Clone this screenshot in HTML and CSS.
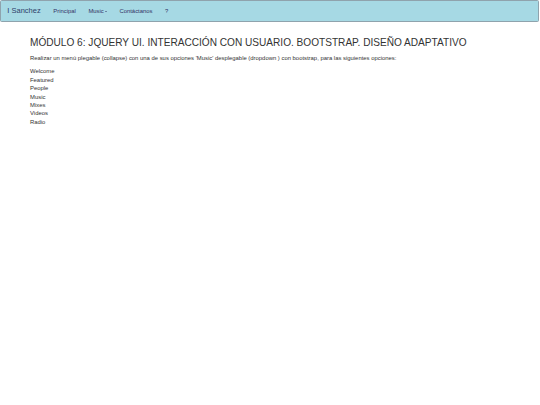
FILE: index.html
```html
<!DOCTYPE html>
<html lang="es">
<head>
<meta charset="utf-8">
<title>Módulo 6</title>
<link rel="stylesheet" href="styles.css">
</head>
<body>
<nav class="navbar">
  <a class="brand" href="#">I Sanchez</a>
  <ul class="nav">
    <li><a href="#">Principal</a></li>
    <li><a href="#">Music<span class="caret"></span></a></li>
    <li><a href="#">Contáctanos</a></li>
    <li><a href="#">?</a></li>
  </ul>
</nav>
<main class="container">
  <h3 class="title">MÓDULO 6: JQUERY UI. INTERACCIÓN CON USUARIO. BOOTSTRAP. DISEÑO ADAPTATIVO</h3>
  <p class="intro">Realizar un menú plegable (collapse) con una de sus opciones 'Music' desplegable (dropdown ) con bootstrap, para las siguientes opciones:</p>
  <ul class="options">
    <li>Welcome</li>
    <li>Featured</li>
    <li>People</li>
    <li>Music</li>
    <li>Mixes</li>
    <li>Videos</li>
    <li>Radio</li>
  </ul>
</main>
</body>
</html>
```
FILE: styles.css
```css
html, body {
  margin: 0;
  padding: 0;
  background: #ffffff;
}
body {
  font-family: "Liberation Sans", Arial, sans-serif;
  font-size: 5.9px;
  line-height: 8.4px;
  color: #333333;
}
.navbar {
  display: flex;
  align-items: center;
  width: 539px;
  height: 22px;
  box-sizing: border-box;
  background: #a6d9e4;
  border: 1px solid #8fa3ad;
  border-radius: 1.5px;
}
.brand {
  font-size: 7.5px;
  color: #2f3f6a;
  text-decoration: none;
  padding: 0 6.3px;
}
.nav {
  display: flex;
  list-style: none;
  margin: 0;
  padding: 0;
}
.nav a {
  display: block;
  padding: 0 6.3px;
  color: #333366;
  text-decoration: none;
  font-size: 5.9px;
}
.caret {
  display: inline-block;
  width: 0;
  height: 0;
  margin-left: 1px;
  vertical-align: middle;
  border-top: 1.7px solid #333366;
  border-left: 1.7px solid transparent;
  border-right: 1.7px solid transparent;
}
.container {
  padding: 0 30px;
}
.title {
  font-size: 10.1px;
  font-weight: normal;
  line-height: 11px;
  margin: 15px 0 6px;
  color: #333333;
}
.intro {
  margin: 0 0 5px;
}
.options {
  list-style: none;
  margin: 0;
  padding: 0;
}
```
